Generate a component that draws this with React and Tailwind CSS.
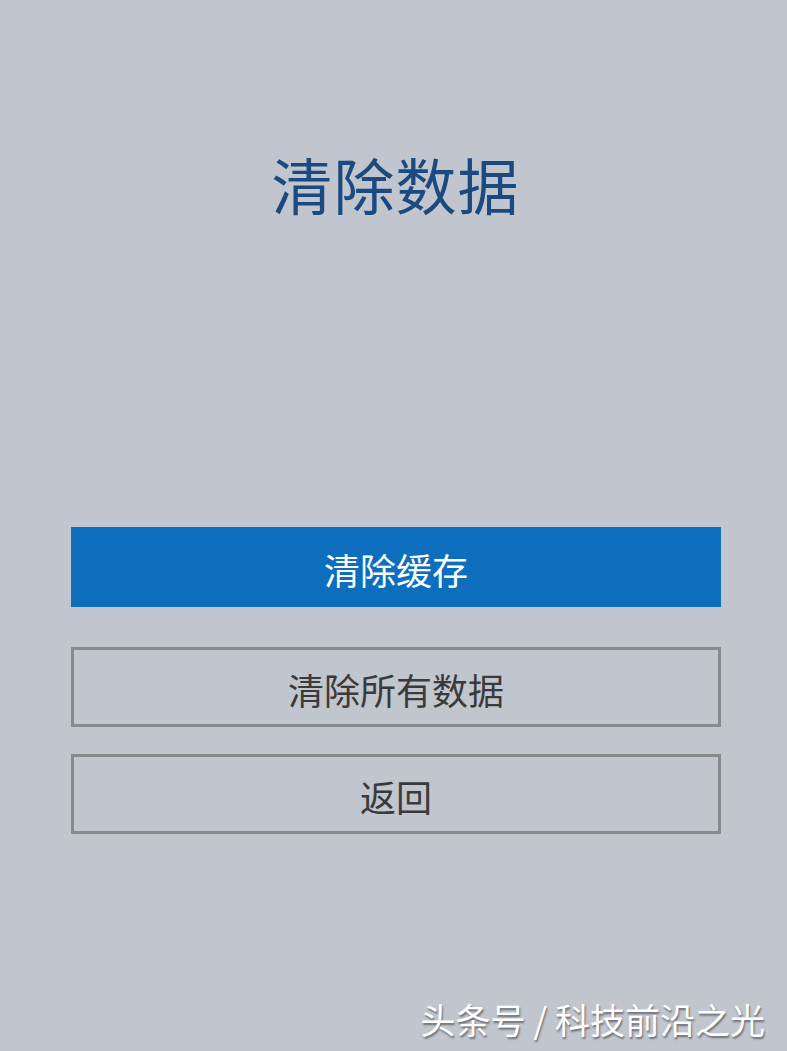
import React from "react";

const cjk = { fontFamily: '"Noto Sans CJK SC", "Noto Sans", sans-serif' };

export default function App() {
  return (
    <div
      className="relative w-[787px] h-[1051px] bg-[#c1c5cd] flex flex-col items-center overflow-hidden"
      style={cjk}
    >
      {/* Title */}
      <h1 className="mt-[146px] ml-[4px] text-[61px] leading-[76px] text-[#1b4a80] tracking-[1px]">
        清除数据
      </h1>

      {/* Buttons */}
      <div className="mt-[305px] self-start ml-[71px] w-[650px] flex flex-col">
        <button className="h-[80px] pt-[4px] bg-[#0d6ebe] text-white text-[36px] leading-none">
          清除缓存
        </button>
        <button className="mt-[40px] h-[80px] pt-[4px] border-[3px] border-[#8a8a8c] text-[#3a3a3a] text-[36px] leading-none">
          清除所有数据
        </button>
        <button className="mt-[27px] h-[80px] pt-[4px] border-[3px] border-[#8a8a8c] text-[#3a3a3a] text-[36px] leading-none">
          返回
        </button>
      </div>

      {/* Watermark */}
      <div className="absolute right-[22px] bottom-[12px] text-[35px] leading-[40px] text-white [text-shadow:1px_2px_2px_rgba(0,0,0,0.45)]">
        头条号 / 科技前沿之光
      </div>
    </div>
  );
}
